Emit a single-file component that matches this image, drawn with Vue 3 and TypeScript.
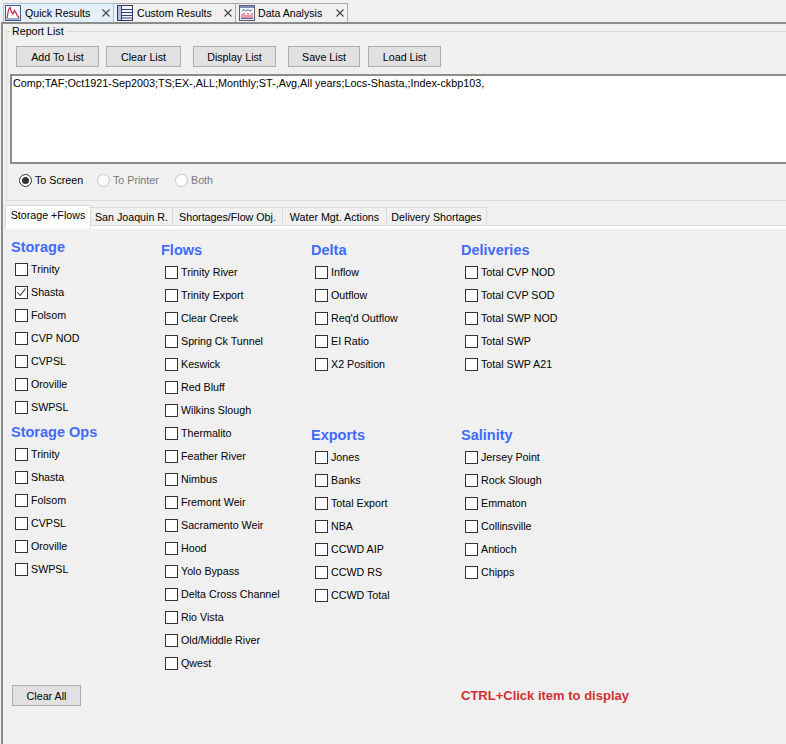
<script setup lang="ts">
interface Group { title: string; items: string[]; cls?: string }
const columns: Group[][] = [
  [
    { title: 'Storage', items: ['Trinity', 'Shasta', 'Folsom', 'CVP NOD', 'CVPSL', 'Oroville', 'SWPSL'] },
    { title: 'Storage Ops', items: ['Trinity', 'Shasta', 'Folsom', 'CVPSL', 'Oroville', 'SWPSL'] },
  ],
  [
    { title: 'Flows', items: ['Trinity River', 'Trinity Export', 'Clear Creek', 'Spring Ck Tunnel', 'Keswick', 'Red Bluff', 'Wilkins Slough', 'Thermalito', 'Feather River', 'Nimbus', 'Fremont Weir', 'Sacramento Weir', 'Hood', 'Yolo Bypass', 'Delta Cross Channel', 'Rio Vista', 'Old/Middle River', 'Qwest'] },
  ],
  [
    { title: 'Delta', items: ['Inflow', 'Outflow', "Req'd Outflow", 'EI Ratio', 'X2 Position'], cls: 'tall' },
    { title: 'Exports', items: ['Jones', 'Banks', 'Total Export', 'NBA', 'CCWD AIP', 'CCWD RS', 'CCWD Total'] },
  ],
  [
    { title: 'Deliveries', items: ['Total CVP NOD', 'Total CVP SOD', 'Total SWP NOD', 'Total SWP', 'Total SWP A21'], cls: 'tall' },
    { title: 'Salinity', items: ['Jersey Point', 'Rock Slough', 'Emmaton', 'Collinsville', 'Antioch', 'Chipps'] },
  ],
]
const buttons = ['Add To List', 'Clear List', 'Display List', 'Save List', 'Load List']
const radios = [
  { label: 'To Screen', on: true },
  { label: 'To Printer', on: false },
  { label: 'Both', on: false },
]
const subTabs = ['San Joaquin R.', 'Shortages/Flow Obj.', 'Water Mgt. Actions', 'Delivery Shortages']
</script>

<template>
  <div class="app">
    <div class="tabs">
      <div class="tab active">
        <svg width="16" height="16" viewBox="0 0 16 16"><rect x="0.5" y="0.5" width="15" height="15" fill="#fbfcff" stroke="#4a5a80"/><path d="M2 13 L3.5 5 L5 2.5 L6.5 7 L8 9 L9.5 5.5 L11 8 L12.5 11 L14 13" fill="none" stroke="#c8324a" stroke-width="1.3"/><path d="M1.5 14H14.5" stroke="#3c5aa0"/></svg>
        <span class="tab-label">Quick Results</span>
        <svg class="close" width="8" height="8" viewBox="0 0 8 8"><path d="M0.5 0.5L7.5 7.5M7.5 0.5L0.5 7.5" stroke="#444" stroke-width="1.1"/></svg>
      </div>
      <div class="tab">
        <svg width="16" height="16" viewBox="0 0 16 16"><rect x="0.5" y="0.5" width="15" height="15" fill="#f6f7fc" stroke="#2f3a6e"/><rect x="1" y="1" width="3" height="14" fill="#b4bedd"/><path d="M4 4.5H15M4 7.5H15M4 10.5H15M4 13H15M4.5 1V15" stroke="#33407a" fill="none"/></svg>
        <span class="tab-label">Custom Results</span>
        <svg class="close" width="8" height="8" viewBox="0 0 8 8"><path d="M0.5 0.5L7.5 7.5M7.5 0.5L0.5 7.5" stroke="#444" stroke-width="1.1"/></svg>
      </div>
      <div class="tab">
        <svg width="16" height="16" viewBox="0 0 16 16"><rect x="0.5" y="0.5" width="15" height="15" fill="#f6f4fa" stroke="#5a5a70"/><rect x="1" y="1" width="14" height="2" fill="#7f8ab8"/><path d="M3 6L5 4.5L7 6L9 4.5L11 6L13 5" stroke="#4a78c8" fill="none"/><path d="M3 13V9M5 13V7.5M7 13V10M9 13V8M11 13V10M13 13V8" stroke="#d8405a"/><path d="M2 13.5H14" stroke="#5060a0"/></svg>
        <span class="tab-label">Data Analysis</span>
        <svg class="close" width="8" height="8" viewBox="0 0 8 8"><path d="M0.5 0.5L7.5 7.5M7.5 0.5L0.5 7.5" stroke="#444" stroke-width="1.1"/></svg>
      </div>
    </div>

    <div class="frame">
      <fieldset class="report">
        <legend>Report List</legend>
        <div class="btns">
          <button v-for="b in buttons" :key="b" class="btn" type="button">{{ b }}</button>
        </div>
        <div class="listbox">Comp;TAF;Oct1921-Sep2003;TS;EX-,ALL;Monthly;ST-,Avg,All years;Locs-Shasta,;Index-ckbp103,</div>
        <div class="radios">
          <label v-for="r in radios" :key="r.label" class="radio" :class="{ off: !r.on }">
            <span class="dot" :class="{ on: r.on }"></span>{{ r.label }}
          </label>
        </div>
      </fieldset>

      <div class="subtabs">
        <div class="subtab active">Storage +Flows</div>
        <div v-for="t in subTabs" :key="t" class="subtab">{{ t }}</div>
      </div>

      <div class="panel">
        <div class="grid">
          <div v-for="(col, ci) in columns" :key="ci" class="col" :class="{ first: ci === 0 }">
            <div v-for="g in col" :key="g.title" class="group" :class="g.cls">
              <h3>{{ g.title }}</h3>
              <div v-for="it in g.items" :key="it" class="row">
                <span class="box">
                  <svg v-if="g.title === 'Storage' && it === 'Shasta'" width="11" height="11" viewBox="0 0 11 11"><path d="M1.5 5.5L4.2 8.5L9.5 1.5" fill="none" stroke="#333" stroke-width="1.1"/></svg>
                </span>
                <span class="row-label">{{ it }}</span>
              </div>
            </div>
          </div>
        </div>
        <div class="foot">
          <button class="btn clear" type="button">Clear All</button>
          <div class="hint">CTRL+Click item to display</div>
        </div>
      </div>
    </div>
  </div>
</template>

<style>
html, body { margin: 0; background: #f0f0f0; }
</style>

<style scoped>
.app {
  width: 786px;
  height: 744px;
  overflow: hidden;
  background: #f0f0f0;
  font-family: "Liberation Sans", Arial, sans-serif;
  font-size: 10.7px;
  color: #000;
}
.tabs {
  display: flex;
  height: 22px;
  padding: 3px 0 0 3px;
  box-sizing: border-box;
}
.tab {
  display: flex;
  align-items: center;
  height: 19px;
  border: 1px solid #a9a9a9;
  border-bottom: none;
  border-left: none;
  padding: 0 3px 0 3px;
  background: #f0f0f0;
  box-sizing: border-box;
}
.tab:nth-child(1) { width: 111px; padding-left: 1px; border-left: 1px solid #a5c6e0; }
.tab:nth-child(2) { width: 122px; }
.tab:nth-child(3) { width: 112px; }
.tab.active { background: #e3eff9; border-color: #a5c6e0; }
.tab-label { margin-left: 4px; white-space: nowrap; font-size: 10.6px; }
.tab:nth-child(3) .tab-label { margin-left: 3px; }
.close { margin-left: auto; flex: none; }

.frame {
  border-top: 2px solid #8c8c8c;
  border-left: 2px solid #8c8c8c;
  height: 722px;
  box-sizing: border-box;
  margin-left: 1px;
}
.report {
  margin: 1px 0 0 3px;
  padding: 0;
  height: 176px;
  border: 1px solid #dadada;
  border-right: none;
  box-sizing: border-box;
  min-width: 0;
}
legend {
  padding: 0 2px;
  margin-left: 3px;
  font-size: 10.7px;
  line-height: 12px;
}
.btns {
  display: flex;
  padding: 9px 0 0 9px;
}
.btn {
  height: 21px;
  padding: 0;
  border: 1px solid #adadad;
  background: #e1e1e1;
  font-family: inherit;
  font-size: 10.7px;
  color: #000;
  box-sizing: border-box;
}
.btns .btn:nth-child(1) { width: 83px; }
.btns .btn:nth-child(2) { width: 75px; margin-left: 7px; }
.btns .btn:nth-child(3) { width: 83px; margin-left: 12px; }
.btns .btn:nth-child(4) { width: 72px; margin-left: 12px; }
.btns .btn:nth-child(5) { width: 73px; margin-left: 8px; }
.listbox {
  margin: 7px 0 0 3px;
  height: 90px;
  border: 2px solid #8c8c8c;
  border-right: none;
  background: #fff;
  padding: 0 0 0 1px;
  box-sizing: border-box;
  font-size: 10.8px;
  line-height: 15px;
}
.radios {
  display: flex;
  padding: 8px 0 0 12px;
  height: 16px;
}
.radio {
  display: flex;
  align-items: center;
  width: 78px;
  gap: 3px;
  color: #000;
}
.radio.off { color: #7a7a7a; }
.dot {
  width: 13px;
  height: 13px;
  border-radius: 50%;
  border: 1px solid #333;
  background: #fff;
  box-sizing: border-box;
  position: relative;
}
.radio.off .dot { border-color: #c4c4c4; }
.dot.on::after {
  content: "";
  position: absolute;
  left: 2px;
  top: 2px;
  width: 7px;
  height: 7px;
  border-radius: 50%;
  background: #333;
}
.subtabs {
  display: flex;
  align-items: flex-end;
  height: 25px;
  margin-left: 2px;
  border-bottom: 1px solid #dadada;
  box-sizing: border-box;
  position: relative;
  z-index: 1;
}
.subtab {
  height: 18px;
  line-height: 18px;
  border: 1px solid #d9d9d9;
  border-left: none;
  border-bottom: none;
  box-sizing: border-box;
  white-space: nowrap;
  text-align: center;
}
.subtab:nth-child(2) { width: 82px; }
.subtab:nth-child(3) { width: 110px; }
.subtab:nth-child(4) { width: 104px; }
.subtab:nth-child(5) { width: 100px; }
.subtab.active {
  background: #fff;
  width: 86px;
  height: 24px;
  line-height: 18px;
  margin-bottom: -4px;
  border: 1px solid #d9d9d9;
  border-bottom: none;
}
.panel {
  margin-left: 2px;
  padding-left: 6px;
  border-top: 3px solid #fff;
}
.grid {
  display: grid;
  grid-template-columns: repeat(4, 150px);
  padding-top: 8px;
  height: 448px;
}
.col { padding-top: 3px; }
.col.first { padding-top: 0; }
.group { margin-bottom: 3px; }
.group.tall { height: 182px; }
h3 {
  margin: 0;
  height: 21px;
  line-height: 21px;
  font-size: 14.5px;
  font-weight: 700;
  color: #3e6cff;
}
.row {
  display: flex;
  align-items: center;
  height: 23px;
  padding-left: 4px;
  gap: 3px;
  white-space: nowrap;
}
.row-label { margin-top: -2px; }
.box {
  width: 13px;
  height: 13px;
  border: 1px solid #333;
  background: #fff;
  box-sizing: border-box;
  display: flex;
  align-items: center;
  justify-content: center;
  flex: none;
}
.foot {
  display: flex;
  align-items: center;
  padding-left: 1px;
  height: 21px;
}
.clear { width: 69px; }
.hint {
  margin-left: 380px;
  font-size: 13px;
  font-weight: 700;
  color: #d23030;
}
</style>
